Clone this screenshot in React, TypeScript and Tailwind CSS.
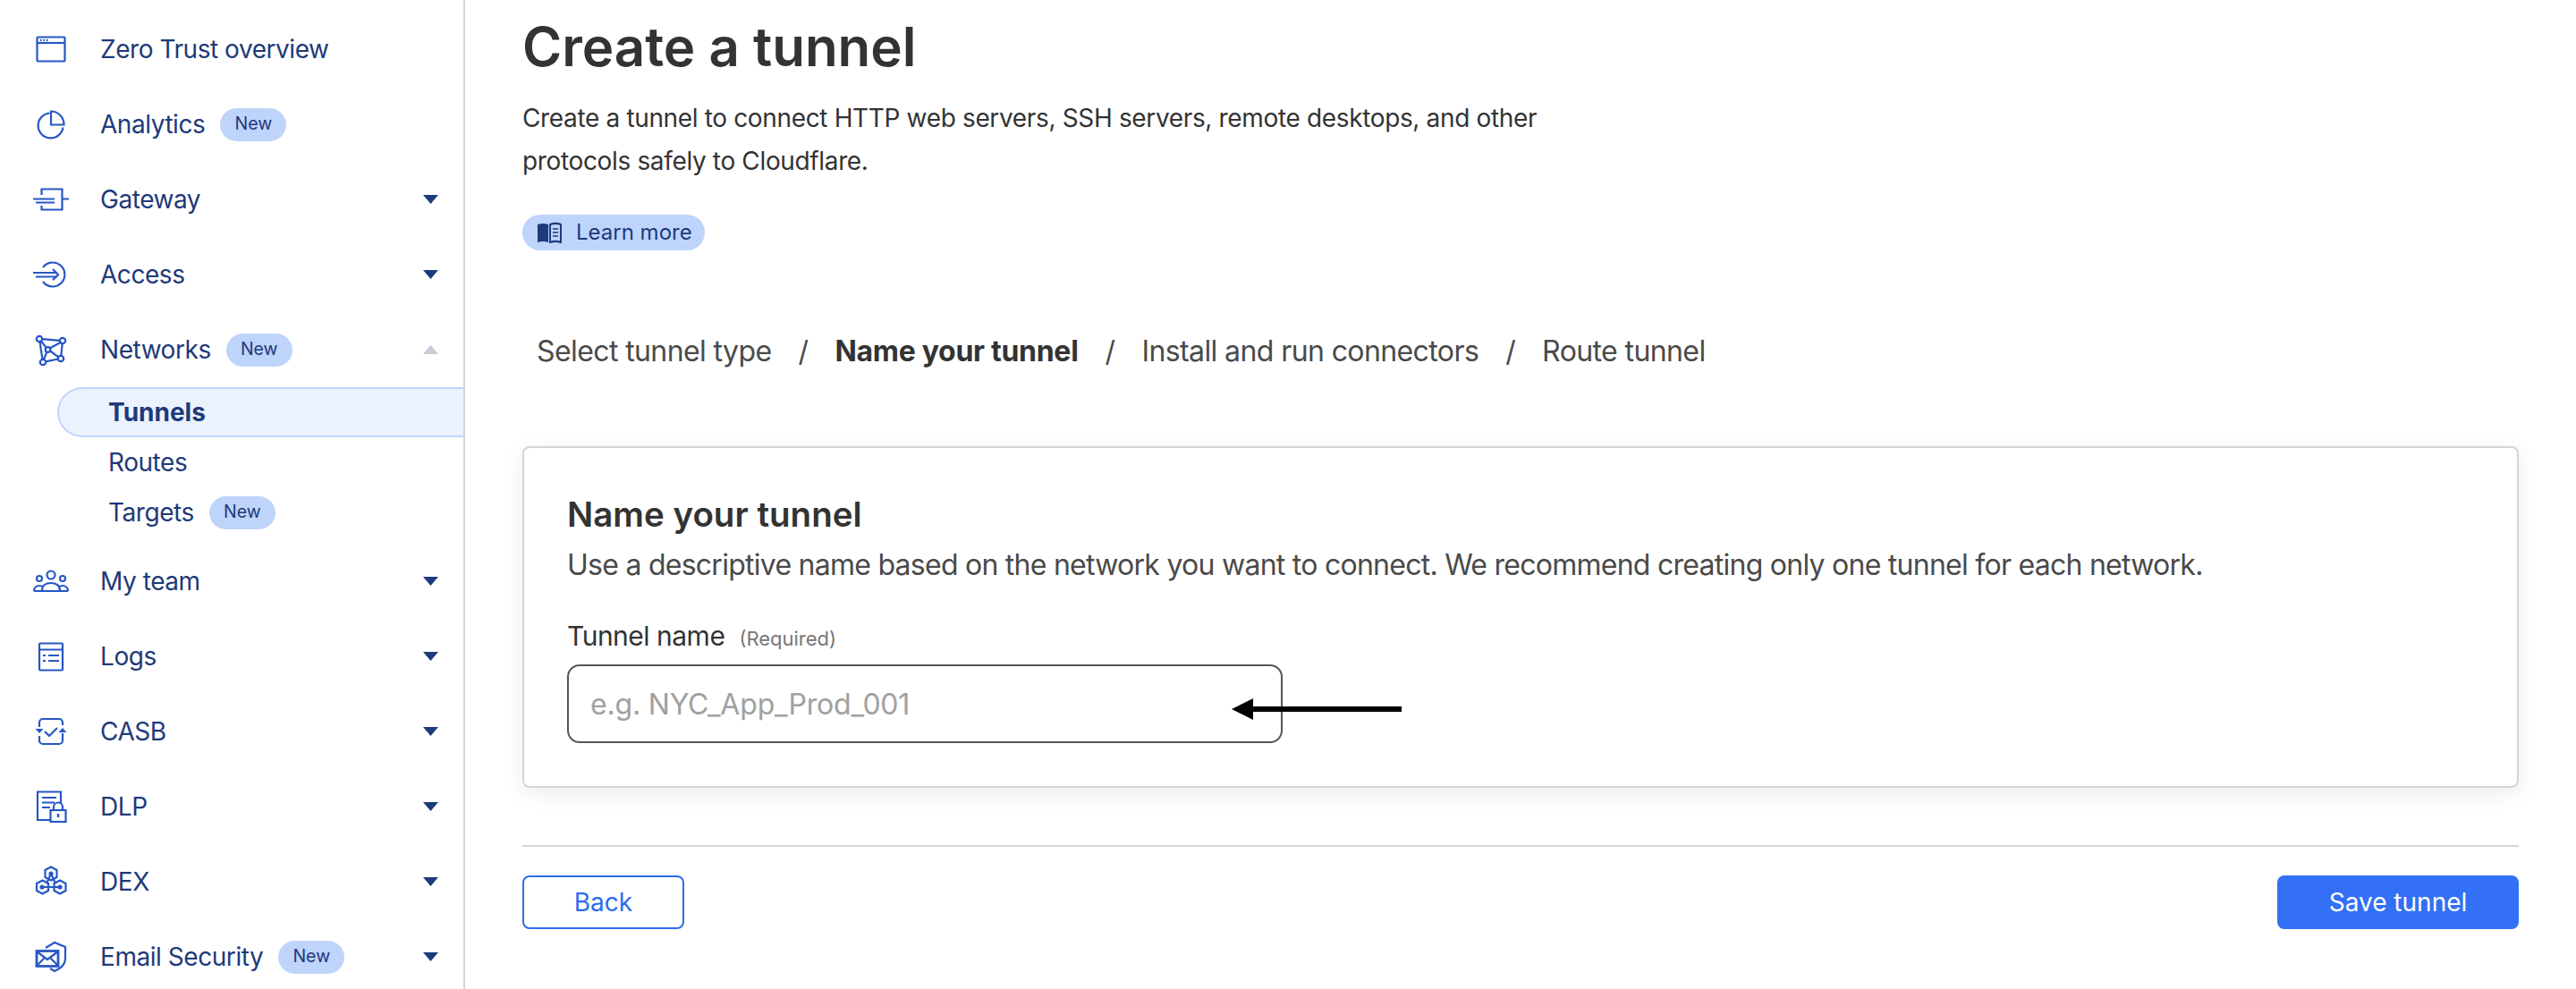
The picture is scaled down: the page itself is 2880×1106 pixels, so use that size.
const INK = "#1d3a7a";

function Icon({ children }: { children: React.ReactNode }) {
  return (
    <svg viewBox="0 0 40 36" className="h-[36px] w-[40px] shrink-0 text-[#2657c5]" fill="none" stroke="currentColor" strokeWidth="2.2">
      {children}
    </svg>
  );
}

const icons: Record<string, React.ReactNode> = {
  overview: (
    <>
      <rect x="4.500" y="4.500" width="31" height="27" rx="1" />
      <path d="M4.500 11h31" />
      <path d="M8 7.800h1.600M11.500 7.800h1.600M15 7.800h1.600" />
    </>
  ),
  analytics: (
    <>
      <path d="M18.500 5.500a14 14 0 1 0 15 16" />
      <path d="M20 3.500a14.500 14.500 0 0 1 14.500 15H20z" />
    </>
  ),
  gateway: (
    <>
      <path d="M9.500 13V6.500h23v23h-23V25" />
      <path d="M32.500 17.500H40M0 17.500h24M3 21.500h21" />
    </>
  ),
  access: (
    <>
      <path d="M11 10a13.500 13.500 0 1 1 0 16" />
      <path d="M0 16h27M3 20.500h24M22 12l6 6.200-6 6" />
    </>
  ),
  networks: (
    <>
      <circle cx="7" cy="6" r="3.200" />
      <circle cx="33" cy="8" r="3.200" />
      <circle cx="11" cy="32" r="3.200" />
      <circle cx="31" cy="28" r="3.200" />
      <circle cx="16.500" cy="18" r="2.800" />
      <path d="M10 6.200l20 1.600M7.500 9.200l3 19.600M32.700 11.200l-1.400 13.600M14 31.300l14-2.800M9 8.500l5.500 7.200M19 16.300l11.500-6.300M19.200 19.500l9.200 6.800M15.300 20.700L12 29" />
    </>
  ),
  team: (
    <>
      <circle cx="20" cy="11" r="4.500" />
      <circle cx="7" cy="15" r="3" />
      <circle cx="33" cy="15" r="3" />
      <path d="M1 29h38M10 28c0-5 4-8 10-8s10 3 10 8M1 29c0-4 3-6 6-6 1.500 0 3 .5 4 1.500M39 29c0-4-3-6-6-6-1.500 0-3 .5-4 1.500" />
    </>
  ),
  logs: (
    <>
      <rect x="7" y="3.500" width="26" height="30" rx="1" />
      <path d="M7 10.500h26M11 17h3M17 17h12M11 23h3M17 23h12" />
    </>
  ),
  casb: (
    <>
      <path d="M7 13V8a4 4 0 0 1 4-4h18a4 4 0 0 1 4 4v3M33 20v8a4 4 0 0 1-4 4H11a4 4 0 0 1-4-4v-5" />
      <path d="M13 18l5 5 9-9" />
      <path d="M2.500 15h9l-4.500 5zM28.500 19h9l-4.500-5z" fill="currentColor" stroke="none" />
    </>
  ),
  dlp: (
    <>
      <path d="M20 33H5V1.500h26V14" />
      <path d="M10 8h16M10 13.500h14M10 19h9" />
      <rect x="19.500" y="22" width="17" height="13" />
      <path d="M23 22v-3.500a5 5 0 0 1 10 0V22" />
      <path d="M28 26v4" strokeWidth="2.500" />
    </>
  ),
  dex: (
    <>
      <path d="M20 1.500l6.500 3.500v8l-6.500 3.500-6.500-3.500V5z" />
      <path d="M10.500 16.500l6.500 3.500v8l-6.500 3.500L4 28v-8z" />
      <path d="M30 16.500l6.500 3.500v8L30 31.500 23.500 28v-8z" />
      <circle cx="20" cy="9" r="1.500" fill="currentColor" />
      <circle cx="10" cy="24" r="1.500" fill="currentColor" />
      <circle cx="30" cy="24" r="1.500" fill="currentColor" />
      <path d="M20 9l-5 11M20 9l5 11M10 24h20" />
    </>
  ),
  email: (
    <>
      <path d="M14 8l10-6 12 5v13c0 7-5 11-12 14l-5-3" />
      <rect x="4" y="11.500" width="24" height="17" strokeWidth="2.800" />
      <path d="M4 12l12 9 12-9M4 28l9-9M28 28l-9-9" />
    </>
  ),
};

function NewBadge() {
  return (
    <span className="flex h-[37px] w-[74px] items-center justify-center rounded-full bg-[#bfd4fb] text-[19.5px] tracking-normal text-[#1d3a7a]">
      New
    </span>
  );
}

function Caret({ up }: { up?: boolean }) {
  return (
    <svg viewBox="0 0 17 10" className="ml-auto mr-[28px] h-[10px] w-[17px]">
      {up ? <path d="M0 10L8.500 0 17 10z" fill="#c5ccd8" /> : <path d="M0 0h17L8.500 10z" fill={INK} />}
    </svg>
  );
}

function NavRow({ icon, label, isNew, caret }: { icon: string; label: string; isNew?: boolean; caret?: "up" | "down" }) {
  return (
    <div className="flex h-[84px] items-center pl-[37px]">
      <Icon>{icons[icon]}</Icon>
      <span className="ml-[35px] text-[28px] tracking-[-0.45px] text-[#1d3a7a]">{label}</span>
      {isNew && <span className="ml-[17px]"><NewBadge /></span>}
      {caret && <Caret up={caret === "up"} />}
    </div>
  );
}

function Sidebar() {
  return (
    <aside className="h-[1106px] w-[520px] shrink-0 overflow-hidden border-r-2 border-[#d5d5d5] pt-[13px]">
      <NavRow icon="overview" label="Zero Trust overview" />
      <NavRow icon="analytics" label="Analytics" isNew />
      <NavRow icon="gateway" label="Gateway" caret="down" />
      <NavRow icon="access" label="Access" caret="down" />
      <NavRow icon="networks" label="Networks" isNew caret="up" />
      <div className="mb-[7px] pl-[64px]">
        <div className="flex h-[56px] items-center rounded-l-full border-2 border-r-0 border-[#bfd4fb] bg-[#ebf2fe] pl-[55px] text-[28px] font-bold text-[#1d3a7a]">
          Tunnels
        </div>
        <div className="flex h-[56px] items-center pl-[57px] text-[28px] tracking-[-0.45px] text-[#1d3a7a]">Routes</div>
        <div className="flex h-[56px] items-center pl-[57px] text-[28px] tracking-[-0.45px] text-[#1d3a7a]">
          Targets
          <span className="ml-[17px]"><NewBadge /></span>
        </div>
      </div>
      <NavRow icon="team" label="My team" caret="down" />
      <NavRow icon="logs" label="Logs" caret="down" />
      <NavRow icon="casb" label="CASB" caret="down" />
      <NavRow icon="dlp" label="DLP" caret="down" />
      <NavRow icon="dex" label="DEX" caret="down" />
      <NavRow icon="email" label="Email Security" isNew caret="down" />
    </aside>
  );
}

function Stepper() {
  const sep = <span className="text-[#4a4a4a]">/</span>;
  return (
    <div className="mt-[93px] flex h-[40px] items-center gap-[30px] pl-[16px] text-[32px] tracking-[-0.6px] text-[#4a4a4a]">
      <span>Select tunnel type</span>
      {sep}
      <span className="font-bold tracking-[-0.3px] text-[#333333]">Name your tunnel</span>
      {sep}
      <span>Install and run connectors</span>
      {sep}
      <span>Route tunnel</span>
    </div>
  );
}

export default function App() {
  return (
    <div className="flex h-[1106px] w-[2880px] overflow-hidden bg-white font-['Inter',sans-serif]">
      <Sidebar />
      <main className="w-[2360px] pl-[64px] pr-[64px]">
        <h1 className="mt-[14px] text-[60px] leading-[76px] font-semibold text-[#333333]">Create a tunnel</h1>
        <p className="mt-[18px] w-[1200px] text-[28px] leading-[48px] tracking-[-0.35px] text-[#333333]">
          Create a tunnel to connect HTTP web servers, SSH servers, remote desktops, and other
          <br />
          protocols safely to Cloudflare.
        </p>
        <a className="mt-[36px] flex h-[40px] w-[204px] items-center gap-[16px] rounded-full bg-[#bfd4fb] pl-[16px] text-[24px] text-[#1d3a7a]">
          <svg viewBox="0 0 28 24" className="h-[24px] w-[28px]">
            <path d="M1 3c4-1.500 8-1.500 12 0v20c-4-1.500-8-1.500-12 0z" fill="#1d3a7a" />
            <path d="M15 3c4-1.500 8-1.500 12 0v20c-4-1.500-8-1.500-12 0z" fill="none" stroke="#1d3a7a" strokeWidth="2" />
            <path d="M18 8h6M18 12h6M18 16h6" stroke="#1d3a7a" strokeWidth="1.500" />
          </svg>
          Learn more
        </a>
        <Stepper />

        <section className="mt-[86px] h-[382px] rounded-[8px] border-2 border-[#d5d5d5] pl-[48px] pt-[50px] shadow-[0_6px_24px_rgba(0,0,0,0.08)]">
          <h2 className="text-[38.5px] leading-[48px] font-semibold text-[#333333]">Name your tunnel</h2>
          <p className="mt-[9px] text-[32px] leading-[48px] tracking-[-0.74px] text-[#4a4a4a]">
            Use a descriptive name based on the network you want to connect. We recommend creating only one tunnel for each network.
          </p>
          <div className="mt-[33px] flex items-baseline gap-[16px] text-[#333333]">
            <span className="text-[30px] leading-[44px] tracking-[-0.5px]">Tunnel name</span>
            <span className="text-[22px] text-[#777777]">(Required)</span>
          </div>
          <div className="relative mt-[10px] h-[88px] w-[800px]">
            <input
              placeholder="e.g. NYC_App_Prod_001"
              className="h-full w-full rounded-[14px] border-2 border-[#555555] pl-[24px] text-[32px] tracking-[-0.2px] outline-none placeholder:text-[#a0a0a0]"
            />
            <svg viewBox="0 0 190 24" className="absolute left-[743px] top-[38px] h-[24px] w-[190px]">
              <path d="M0 12L24 0v9h166v6H24v9z" fill="#000000" />
            </svg>
          </div>
        </section>

        <div className="mt-[64px] border-t-2 border-[#d5d5d5] pt-[32px]">
          <div className="flex items-center justify-between">
            <button className="h-[60px] w-[181px] rounded-[8px] border-2 border-[#2c6cf0] text-[28px] text-[#2c6cf0]">Back</button>
            <button className="h-[60px] w-[270px] rounded-[8px] bg-[#3370f6] text-[28px] text-white">Save tunnel</button>
          </div>
        </div>
      </main>
    </div>
  );
}
